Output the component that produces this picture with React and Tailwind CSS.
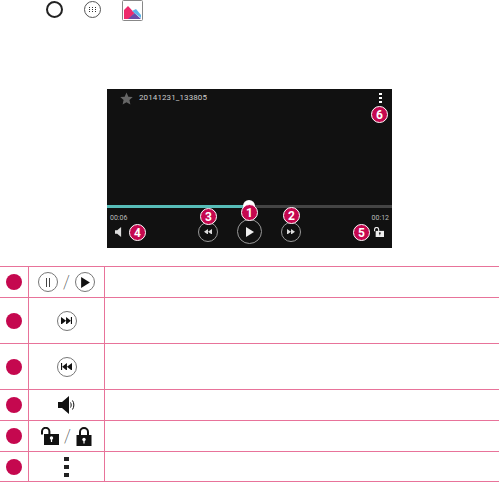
const CIRCLE = "flex items-center justify-center rounded-full border border-[#777]";

function Badge({ n, className }) {
  return (
    <span
      className={`absolute flex h-[17px] w-[17px] items-center justify-center rounded-full border border-white bg-[#c5084f] text-[12px] leading-none font-bold text-white ${className}`}
    >
      {n}
    </span>
  );
}

function Dot() {
  return <span className="block h-4 w-4 rounded-full bg-[#c5084f]" />;
}

function Skip({ back, bar = true, size = 11, color = "#111" }) {
  if (!bar) {
    return (
      <svg width={size} height={size * 0.7} viewBox="0 0 10 7" fill={color}>
        {back ? <path d="M5 0v7L0 3.5zM10 0v7L5 3.5z" /> : <path d="M0 0v7l5-3.5zM5 0v7l5-3.5z" />}
      </svg>
    );
  }
  return (
    <svg width={size} height={size * 0.7} viewBox="0 0 10 7" fill={color}>
      {back ? (
        <path d="M0 0h1v7H0zM5.4 0v7L1 3.5zM10 0v7L5.4 3.5z" />
      ) : (
        <path d="M10 0H9v7h1zM4.6 0v7L9 3.5zM0 0v7l4.6-3.5z" />
      )}
    </svg>
  );
}

function Speaker({ size = 18, color = "#111", waves = true }) {
  return (
    <svg width={size} height={size} viewBox="0 0 18 18" fill="none">
      <path d="M0 6h4l7-6v18l-7-6H0z" fill={color} />
      {waves && <path d="M12.5 6.5c.9 1.4.9 3.6 0 5" stroke={color} strokeWidth="1" />}
      {waves && <path d="M14.5 4.5c1.8 2.6 1.8 6.4 0 9" stroke={color} strokeWidth="1" />}
    </svg>
  );
}

function LockOpen({ color = "#111", hole = "#fff", className = "h-[18px] w-[18px]" }) {
  return (
    <svg className={className} viewBox="0 0 18 18" fill="none">
      <path d="M1 7.5V4.5a3.7 3.7 0 0 1 7.4 0V8" stroke={color} strokeWidth="2" />
      <rect x="3" y="7" width="15" height="11" fill={color} />
      <circle cx="10.5" cy="11" r="1.7" fill={hole} />
      <rect x="9.9" y="11.5" width="1.2" height="3.5" fill={hole} />
    </svg>
  );
}

function LockClosed() {
  return (
    <svg className="h-[19px] w-[16px]" viewBox="0 0 16 19" fill="none">
      <path d="M4 9V5a4 4 0 0 1 8 0v4" stroke="#111" strokeWidth="2" />
      <rect x="0.5" y="8" width="15" height="11" fill="#111" />
      <circle cx="8" cy="12.5" r="1.7" fill="#fff" />
      <rect x="7.4" y="13" width="1.2" height="3.5" fill="#fff" />
    </svg>
  );
}

function Dots({ className, color }) {
  return (
    <div className={`flex flex-col ${className}`}>
      <span className={`block flex-1 ${color}`} />
      <span className="block flex-1" />
      <span className={`block flex-1 ${color}`} />
      <span className="block flex-1" />
      <span className={`block flex-1 ${color}`} />
    </div>
  );
}

function Row({ height, children }) {
  return (
    <div className={`grid grid-cols-[28px_1px_75px_1px_1fr] border-b border-[#e8739a] ${height}`}>
      <div className="flex items-center justify-center">
        <Dot />
      </div>
      <div className="bg-[#e8739a]" />
      <div className="flex items-center justify-center gap-[5px]">{children}</div>
      <div className="bg-[#e8739a]" />
      <div />
    </div>
  );
}

function Slash() {
  return <span className="font-['Roboto',sans-serif] text-[18px] leading-none font-thin text-[#222]">/</span>;
}

function Video() {
  return (
    <div className="relative ml-[107px] flex h-[159px] w-[285px] flex-col bg-[#111] font-['Roboto',sans-serif] text-[#bbb]">
      <div className="flex h-[18px] items-center justify-between pr-[10px] pl-[13px]">
        <div className="flex items-center gap-[6px]">
          <svg width="13" height="13" viewBox="0 0 24 24" fill="#666">
            <path d="M12 1l3.4 7.6 8.1.8-6.1 5.4 1.8 8.1L12 18.7l-7.2 4.2 1.8-8.1L.5 9.4l8.1-.8z" />
          </svg>
          <span className="text-[8px] leading-none tracking-[0.1px] text-[#ccc]">20141231_133805</span>
        </div>
        <Dots className="h-[10px] w-[3px]" color="bg-white" />
      </div>

      <div className="mt-[98px] flex h-[3px] w-full">
        <div className="w-[137px] bg-[#57bdb8]" />
        <div className="flex-1 bg-[#444]" />
      </div>

      <div className="flex items-start justify-between px-[3px] pt-[7px] text-[7px] leading-none">
        <span>00:06</span>
        <span>00:12</span>
      </div>

      <div className="-mt-[3px] flex items-center pr-[8px] pl-[8px]">
        <Speaker size={10} color="#ddd" waves={false} />
        <div className="ml-[73px] flex items-center gap-[19px]">
          <div className={`${CIRCLE} h-[20px] w-[20px] border-[#999]`}>
            <Skip back bar={false} size={8} color="#ddd" />
          </div>
          <div className={`${CIRCLE} h-[25px] w-[25px] border-[#999]`}>
            <svg width="8" height="10" viewBox="0 0 8 10" fill="#eee">
              <path d="M0 0l8 5-8 5z" />
            </svg>
          </div>
          <div className={`${CIRCLE} h-[20px] w-[20px] border-[#999]`}>
            <Skip bar={false} size={8} color="#ddd" />
          </div>
        </div>
        <LockOpen color="#eee" hole="#111" className="ml-auto h-[10px] w-[10px]" />
      </div>

      <span className="absolute top-[111px] left-[136px] h-[12px] w-[12px] rounded-full bg-white" />
      <Badge n={6} className="top-[17px] left-[264px]" />
      <Badge n={1} className="top-[115px] left-[134px]" />
      <Badge n={2} className="top-[118px] left-[176px]" />
      <Badge n={3} className="top-[119px] left-[93px]" />
      <Badge n={4} className="top-[135px] left-[22px]" />
      <Badge n={5} className="top-[135px] left-[246px]" />
    </div>
  );
}

export default function App() {
  return (
    <div className="h-[482px] w-[499px] overflow-hidden bg-white">
      <div className="flex h-[89px] items-start pl-[46px]">
        <span className="mt-[1px] block h-[17px] w-[17px] rounded-full border-2 border-[#222]" />
        <span className="mt-[1px] ml-[21px] flex h-[17px] w-[17px] items-center justify-center rounded-full border border-[#555]">
          <span className="grid grid-cols-3 gap-x-[2px] gap-y-[1px]">
            {[...Array(9)].map((_, i) => (
              <span key={i} className="block h-[1px] w-[1px] bg-[#333]" />
            ))}
          </span>
        </span>
        <svg className="ml-[21px]" width="21" height="21" viewBox="0 0 21 21">
          <rect x="0.5" y="0.5" width="20" height="20" rx="1" fill="#fff" stroke="#888" />
          <path d="M2 19V10l4-4 6.5 7L7 19z" fill="#ee2a6c" />
          <path d="M10 11l4-2 5 6v3z" fill="#5bb4ea" />
          <path d="M6 19l6.5-6 6.5 6z" fill="#6a4aa8" />
        </svg>
      </div>

      <Video />

      <div className="mt-[18px] border-t border-[#e8739a]">
        <Row height="h-[31px]">
          <div className={`${CIRCLE} h-[20px] w-[20px] gap-[2px]`}>
            <span className="h-[9px] w-[1px] bg-[#444]" />
            <span className="h-[9px] w-[1px] bg-[#444]" />
          </div>
          <Slash />
          <div className={`${CIRCLE} h-[20px] w-[20px]`}>
            <svg width="9" height="11" viewBox="0 0 8 10" className="ml-[1px]" fill="#111">
              <path d="M0 0l8 5-8 5z" />
            </svg>
          </div>
        </Row>
        <Row height="h-[46px]">
          <div className={`${CIRCLE} h-[20px] w-[20px]`}>
            <Skip />
          </div>
        </Row>
        <Row height="h-[46px]">
          <div className={`${CIRCLE} h-[20px] w-[20px]`}>
            <Skip back />
          </div>
        </Row>
        <Row height="h-[31px]">
          <Speaker />
        </Row>
        <Row height="h-[31px]">
          <LockOpen />
          <Slash />
          <LockClosed />
        </Row>
        <Row height="h-[30px]">
          <Dots className="h-[20px] w-[5px]" color="bg-[#222]" />
        </Row>
      </div>
    </div>
  );
}
